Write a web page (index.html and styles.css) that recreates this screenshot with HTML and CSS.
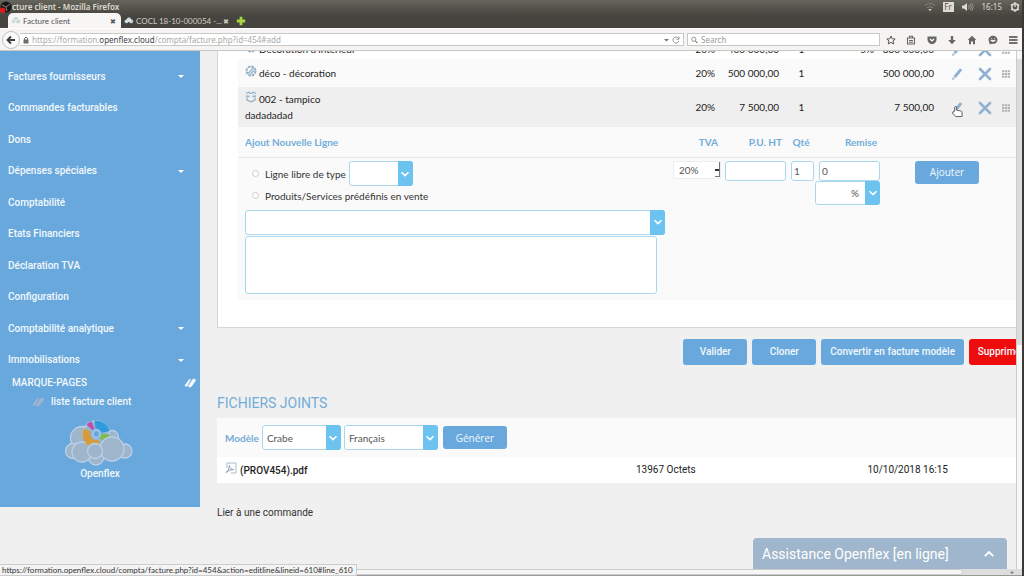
FILE: index.html
```html
<!DOCTYPE html>
<html lang="fr">
<head>
<meta charset="utf-8">
<title>Facture client</title>
<link rel="stylesheet" href="styles.css">
</head>
<body>
<svg class="defs" aria-hidden="true">
  <symbol id="chevron" viewBox="0 0 10 10"><path d="M1.500 3.200 5 6.600 8.500 3.200" fill="none" stroke="currentColor" stroke-width="1.600"/></symbol>
  <symbol id="cloud" viewBox="0 0 12 10"><circle cx="3" cy="6" r="2.300" fill="#cfdbe2"/><circle cx="8.500" cy="6" r="2.500" fill="#c3d2dc"/><circle cx="5.800" cy="4" r="2.700" fill="#dfe8d2"/><path d="M3.500 3.500A3 3 0 0 1 8 2.500" fill="none" stroke="#7fb6d8" stroke-width="1"/></symbol>
  <symbol id="pencil" viewBox="0 0 12 14"><path d="M9 1.200 11.300 3 4.800 11 2.400 9.200zM1.900 10 4 11.700 1 13z" fill="#90b1d0"/></symbol>
  <symbol id="cross" viewBox="0 0 14 14"><path d="M2 2 12 12M12 2 2 12" stroke="#90b1d0" stroke-width="2.600" stroke-linecap="round"/></symbol>
  <symbol id="grip" viewBox="0 0 8 8"><path d="M0 1.200H8M0 4H8M0 6.800H8" stroke="#b4b4b4" stroke-width="2" stroke-dasharray="2.300 .6"/></symbol>
  <symbol id="service" viewBox="0 0 12 12"><circle cx="6" cy="6" r="4.500" fill="none" stroke="#8fb0c9" stroke-width="2" stroke-dasharray="2.600 .9"/><path d="M3 8.500 8.500 3M5.500 9 9 5.500" stroke="#8fb0c9" stroke-width="1.200"/></symbol>
  <symbol id="product" viewBox="0 0 12 12"><path d="M.8 2.500 4 1.200 5.500 2.800M6.500 2.800 8 1.200 11.200 2.500M1 5 4.500 5.500M7.500 5.500 11 5M2 6.500V9L6 10.800 10 9V6.500" fill="none" stroke="#8fb0c9" stroke-width="1.300"/></symbol>
  <symbol id="books" viewBox="0 0 12 10"><path d="M.5 7.500 5 1.500 7.200 .8 3.800 7.500 2.500 9zM4.200 8 8.500 1.300 11.200 .6 11.600 3 7.700 8.500 5 9.700z" fill="currentColor"/></symbol>
</svg>

<header class="browser">
  <div class="titlebar">
    <svg class="dash" viewBox="0 0 12 12"><circle cx="6" cy="6" r="5.500" fill="#171515"/><path d="M2 4 6 6 10 3M6 6 7 10" stroke="#85827a" fill="none"/><circle cx="2.700" cy="9.200" r="2.600" fill="#e81818"/></svg>
    <span class="window-name">cture client - Mozilla Firefox</span>
    <div class="indicators">
      <svg class="i10" viewBox="0 0 10 10"><path d="M0 3.500Q5 -.5 10 3.500M2 5.800Q5 3.500 8 5.800" fill="none" stroke="#85837a"/><path d="M3.300 7H6.700L5 9.200z" fill="#d0cec4"/></svg>
      <span class="lang">Fr</span>
      <svg class="i12" viewBox="0 0 12 10"><path d="M0 3.500H2L5 1V9L2 6.500H0z" fill="#dfdbd2"/><path d="M6.500 3Q8 5 6.500 7M8 2Q10.400 5 8 8M9.500 1Q12.700 5 9.500 9" fill="none" stroke="#98958c"/></svg>
      <span class="clock">16:15</span>
      <svg class="i10" viewBox="0 0 10 10"><circle cx="5" cy="5" r="3.200" fill="none" stroke="#dfdbd2" stroke-width="1.500" /><path d="M5 0V5M.8 2.500 2 3.500M9.200 2.500 8 3.500M1 8 2.500 7M9 8 7.500 7M5 8V10" stroke="#dfdbd2" stroke-width="1.300"/></svg>
    </div>
  </div>
  <nav class="tabs">
    <a class="tab current" href="#"><svg class="fav"><use href="#cloud"/></svg><span class="tab-text">Facture client</span><span class="tab-close">✖</span></a>
    <a class="tab" href="#"><svg class="fav"><use href="#cloud"/></svg><span class="tab-text">COCL 18-10-000054 -...</span><span class="tab-close">✖</span></a>
    <button class="new-tab" aria-label="Nouvel onglet"><svg class="i10" viewBox="0 0 10 10"><path d="M5 .8V9.200M.8 5H9.200" stroke="#a8d442" stroke-width="2.800"/></svg></button>
  </nav>
  <div class="toolbar">
    <button class="back" aria-label="Retour"><svg class="i10" viewBox="0 0 10 10"><path d="M9 5H2.500M5 1.500 1.500 5 5 8.500" fill="none" stroke="#3f3f3c" stroke-width="1.900"/></svg></button>
    <div class="address">
      <svg class="lock" viewBox="0 0 6 8"><path d="M1.500 4V2.200Q3 .2 4.500 2.200V4" fill="none" stroke="#6d6d6b"/><path d="M.5 3.500H5.500V7.500H.5z" fill="#6d6d6b"/></svg>
      <span class="url">https://formation.<b>openflex.cloud</b>/compta/facture.php?id=454#add</span>
      <svg class="reload" viewBox="0 0 16 8"><path d="M0 3H5L2.500 5.500z" fill="#777"/><path d="M14.500 2.500A3 3 0 1 0 14.800 5M15 .5V3.200H12.300" fill="none" stroke="#999"/></svg>
    </div>
    <label class="search"><svg class="lens" viewBox="0 0 8 8"><circle cx="3.200" cy="3.200" r="2.400" fill="none" stroke="#888"/><path d="M5 5 7.500 7.500" stroke="#888" stroke-width="1.300"/></svg><input type="text" aria-label="Search" placeholder="Search"></label>
    <div class="tools">
      <svg class="i10" viewBox="0 0 10 10"><path d="M5 1 6.200 3.800 9.200 4 7 6 7.700 9 5 7.400 2.300 9 3 6 .8 4 3.800 3.800z" fill="none" stroke="#555"/></svg>
      <svg class="i10" viewBox="0 0 10 10"><path d="M1.500 3H8.500V9H1.500zM3.500 3V1.300H6.500V3M3 5.500H7M3 7.300H7" fill="none" stroke="#666" stroke-width="1.100"/></svg>
      <svg class="i10" viewBox="0 0 10 10"><path d="M.5 1.500H9.500V5Q9 8.500 5 9.300 1 8.500 .5 5z" fill="#666"/><path d="M3 4 5 6 7 4" fill="none" stroke="#fff" stroke-width="1.200"/></svg>
      <svg class="i10" viewBox="0 0 10 10"><path d="M3.800 1H6.200V5H8.800L5 9.200 1.200 5H3.800z" fill="#666"/></svg>
      <svg class="i10" viewBox="0 0 10 10"><path d="M5 .8 9.300 5H8V9.200H6V6.500H4V9.200H2V5H.7z" fill="#666"/></svg>
      <svg class="i10" viewBox="0 0 10 10"><ellipse cx="5" cy="4.800" rx="4.500" ry="4" fill="#666"/><path d="M1.500 6V9.500L5 8z" fill="#666"/><path d="M2.500 5.300H7.500Q5 8 2.500 5.300M3 3.500H4M6 3.500H7" fill="#fff" stroke="#fff" stroke-width=".6"/></svg>
      <svg class="i10" viewBox="0 0 10 10"><path d="M1 2H9.500M1 5H9.500M1 8H9.500" stroke="#444" stroke-width="1.700"/></svg>
    </div>
  </div>
</header>

<div class="viewport">
  <div class="page">
    <aside class="sidebar">
      <ul class="menu">
        <li><a href="#">Factures fournisseurs</a><i class="caret"></i></li>
        <li><a href="#">Commandes facturables</a></li>
        <li><a href="#">Dons</a></li>
        <li><a href="#">Dépenses spéciales</a><i class="caret"></i></li>
        <li><a href="#">Comptabilité</a></li>
        <li><a href="#">Etats Financiers</a></li>
        <li><a href="#">Déclaration TVA</a></li>
        <li><a href="#">Configuration</a></li>
        <li><a href="#">Comptabilité analytique</a><i class="caret"></i></li>
        <li><a href="#">Immobilisations</a><i class="caret"></i></li>
      </ul>
      <div class="bookmarks"><span>MARQUE-PAGES</span><svg class="books"><use href="#books"/></svg></div>
      <a class="bookmark" href="#"><svg class="books"><use href="#books"/></svg>liste facture client</a>
      <a class="brand" href="#">
        <svg class="logo" viewBox="0 0 68 46">
          <g fill="#9fb5ca" stroke="#b9d0ec" stroke-width="1.300">
            <circle cx="17" cy="18" r="11.500"/><circle cx="47" cy="17" r="6.500"/><circle cx="8" cy="31" r="7.500"/><circle cx="60" cy="31" r="7"/><circle cx="31" cy="37" r="8"/><circle cx="17" cy="32" r="10"/>
            <circle cx="31" cy="14" r="13" fill="#8fb9dd"/>
          </g>
          <g fill="none" stroke-width="8">
            <path d="M30 4.500A9.500 9.500 0 0 1 40.500 12" stroke="#2d9bdc"/><path d="M40.500 14A9.500 9.500 0 0 1 37 20.500" stroke="#7fbd50"/><path d="M35 23A9.500 9.500 0 0 1 22.500 10" stroke="#d59b3c"/><path d="M24.500 7.500A9.500 9.500 0 0 1 28 5" stroke="#c84da8"/>
          </g>
          <circle cx="31.500" cy="14" r="3.500" fill="#69a8dc" stroke="#b9d0ec"/>
          <g fill="#9fb5ca" stroke="#b9d0ec" stroke-width="1.300"><circle cx="47" cy="29" r="12"/><circle cx="30" cy="31" r="7.500"/></g>
        </svg>
        <span>Openflex</span>
      </a>
    </aside>

    <main class="content">
      <section class="card">
        <table class="lines">
          <colgroup><col><col class="c-tva"><col class="c-price"><col class="c-qty"><col class="c-disc"><col class="c-total"><col class="c-edit"><col class="c-del"><col class="c-grip"></colgroup>
          <tbody>
            <tr class="line first"><td><svg class="kind"><use href="#service"/></svg>Décoration d'intérieur</td><td>20%</td><td>400 000,00</td><td>1</td><td>5%</td><td>380 000,00</td><td><svg class="pencil"><use href="#pencil"/></svg></td><td><svg class="cross"><use href="#cross"/></svg></td><td><svg class="grip"><use href="#grip"/></svg></td></tr>
            <tr class="line"><td><svg class="kind"><use href="#service"/></svg>déco - décoration</td><td>20%</td><td>500 000,00</td><td>1</td><td></td><td>500 000,00</td><td><svg class="pencil"><use href="#pencil"/></svg></td><td><svg class="cross"><use href="#cross"/></svg></td><td><svg class="grip"><use href="#grip"/></svg></td></tr>
            <tr class="line shaded"><td><svg class="kind"><use href="#product"/></svg>002 - tampico<br>dadadadad</td><td>20%</td><td>7 500,00</td><td>1</td><td></td><td>7 500,00</td><td><svg class="pencil"><use href="#pencil"/></svg></td><td><svg class="cross"><use href="#cross"/></svg></td><td><svg class="grip"><use href="#grip"/></svg></td></tr>
            <tr class="heads"><th>Ajout Nouvelle Ligne</th><th>TVA</th><th>P.U. HT</th><th>Qté</th><th>Remise</th><th colspan="4"></th></tr>
            <tr class="entry">
              <td>
                <div class="choice"><input type="radio" name="kind" id="free"><label for="free">Ligne libre de type</label>
                  <span class="combo combo-type"><select aria-label="Type de ligne"><option></option></select><span class="arrow"><svg><use href="#chevron"/></svg></span></span></div>
                <div class="choice second"><input type="radio" name="kind" id="preset"><label for="preset">Produits/Services prédéfinis en vente</label></div>
                <span class="combo combo-product"><select aria-label="Produit"><option></option></select><span class="arrow"><svg><use href="#chevron"/></svg></span></span>
                <textarea aria-label="Description"></textarea>
              </td>
              <td><div class="vat"><select aria-label="TVA"><option>20%</option></select><span class="vat-arrow"></span></div></td>
              <td><input class="field" type="text" aria-label="P.U. HT"></td>
              <td><input class="field qty" type="text" value="1" aria-label="Qté"></td>
              <td><input class="field disc" type="text" value="0" aria-label="Remise"><span class="combo combo-unit"><select aria-label="Unité de remise"><option>%</option></select><span class="arrow"><svg><use href="#chevron"/></svg></span></span></td>
              <td class="add" colspan="4"><button class="btn small">Ajouter</button></td>
            </tr>
          </tbody>
        </table>
      </section>

      <div class="actions"><button class="btn">Valider</button><button class="btn">Cloner</button><button class="btn">Convertir en facture modèle</button><button class="btn danger">Supprimer</button></div>

      <h2>FICHIERS JOINTS</h2>
      <section class="files">
        <div class="generate"><label for="model">Modèle</label>
          <span class="combo combo-model"><select id="model"><option>Crabe</option></select><span class="arrow"><svg><use href="#chevron"/></svg></span></span>
          <span class="combo combo-lang"><select aria-label="Langue"><option>Français</option></select><span class="arrow"><svg><use href="#chevron"/></svg></span></span>
          <button class="btn small">Générer</button></div>
        <div class="file"><a href="#"><svg class="pdf" viewBox="0 0 12 12"><path d="M2 6V1H11V11H6" fill="none" stroke="#a9b9c9"/><path d="M1 10.500Q4 9 4.500 3.500 5 8 9 7.500 5 7 1 10.500" fill="none" stroke="#8fa5bb"/></svg>(PROV454).pdf</a><span>13967 Octets</span><span class="when">10/10/2018 16:15</span></div>
      </section>
      <p class="link-order">Lier à une commande</p>
    </main>
  </div>
  <div class="vscroll"><div class="thumb"></div></div>
  <button class="assist">Assistance Openflex [en ligne]<svg><use href="#chevron"/></svg></button>
  <div class="status">https://formation.openflex.cloud/compta/facture.php?id=454&amp;action=editline&amp;lineid=610#line_610</div>
  <svg class="pointer" viewBox="0 0 12 14"><path d="M3 6.500V2Q4 .8 5 2V5.500L10 6.500Q11 7 11 8.500V12.500H4L1 9V7.500Z" fill="#fff" stroke="#555"/></svg>
</div>
<div class="hscroll"><div class="hthumb"></div><span>▸</span></div>
</body>
</html>
```
FILE: styles.css
```css
* { box-sizing: border-box; }
body { margin: 0; height: 100vh; display: flex; flex-direction: column; overflow: hidden; background: #f0f0f0; color: #333; font: 400 10px/16px Lato, "Open Sans", sans-serif; border-right: 2px solid #3a3935; }
button, input, select, textarea { font: inherit; color: inherit; margin: 0; }
button { border: 0; padding: 0; background: none; }
a { color: inherit; text-decoration: none; }
.defs { position: absolute; width: 0; height: 0; }
.i10 { width: 10px; height: 10px; }
.i12 { width: 12px; height: 10px; }

/* browser window */
.browser { background: linear-gradient(#66655b, #45443e 16px, #45443e); font: 8px/12px "Noto Sans", "Open Sans", sans-serif; }
.titlebar { display: flex; align-items: center; height: 13px; color: #dfdbd2; }
.dash { width: 12px; height: 12px; }
.window-name { font-weight: 600; flex: 1; }
.indicators { display: flex; align-items: center; gap: 8px; padding-right: 2px; }
.lang { background: #dfdbd2; color: #55534b; width: 11px; height: 10px; line-height: 10px; text-align: center; }
.tabs { display: flex; height: 15px; padding-left: 8px; }
.tab { display: flex; align-items: center; gap: 2px; width: 113px; padding: 0 5px 0 3px; color: #d0cdc4; font-family: Lato, sans-serif; }
.tab.current { background: #f7f6f5; color: #555; border-radius: 5px 5px 0 0; }
.tab-text { flex: 1; min-width: 0; white-space: nowrap; }
.tab-close { font-size: 7px; }
.fav { flex: none; width: 10px; height: 9px; }
.new-tab { display: flex; align-items: center; padding-left: 2px; }
.toolbar { display: flex; align-items: center; height: 23px; background: #f5f4f2; border-top: 1px solid #fff; border-bottom: 1px solid #c8c7c4; padding: 0 4px 0 2px; }
.back { width: 18px; height: 18px; border: 1px solid #c0bfbc; border-radius: 50%; background: #fcfcfc; display: grid; place-items: center; }
.address, .search { display: flex; align-items: center; height: 13px; background: #fff; border: 1px solid #c9c8c5; }
.address { flex: 1; border-left: 0; padding: 0 3px; gap: 3px; }
.lock { width: 6px; height: 8px; }
.url { flex: 1; color: #aaa; }
.url b { color: #444; font-weight: 400; }
.reload { width: 16px; height: 8px; }
.search { width: 193px; margin-left: 3px; padding-left: 3px; gap: 3px; }
.search input { flex: 1; min-width: 0; border: 0; padding: 0; height: 11px; }
.search input::placeholder { color: #999; }
.lens { width: 7px; height: 8px; }
.tools { display: flex; justify-content: space-between; width: 132px; margin-left: 6px; }

/* page frame */
.viewport { flex: 1; min-height: 0; display: flex; position: relative; }
.page { flex: 1; min-width: 0; display: flex; align-items: flex-start; overflow: hidden; }
.vscroll { width: 6px; background: #f7f7f7; border-left: 1px solid #ccc; padding-top: 8px; }
.thumb { height: 56%; background: #dcdcdc; }
.hscroll { display: flex; align-items: center; height: 7px; background: #ddd; border-bottom: 1px solid #999; font-size: 6px; padding-right: 8px; color: #777; }
.hthumb { height: 6px; width: 95%; background: #f6f6f6; border: 1px solid #ccc; border-radius: 0 3px 3px 0; margin-right: auto; }

/* sidebar */
.sidebar { flex: none; width: 200px; background: #69a8dc; color: #f2f8fd; font: 500 10px/16px Roboto, sans-serif; padding: 10px 0 25px; }
.menu { list-style: none; margin: 0; padding: 0 14px 0 8px; display: grid; grid-auto-rows: 1fr; height: 315px; }
.menu li { display: flex; align-items: center; justify-content: space-between; }
.caret { border: 3px solid transparent; border-top-color: #fff; border-bottom: 0; margin-right: 2px; }
.books { width: 12px; height: 10px; }
.bookmarks { display: flex; justify-content: space-between; align-items: center; padding: 0 4px 0 12px; height: 14px; }
.bookmark { display: flex; align-items: center; gap: 7px; padding: 4px 0 0 32px; }
.bookmark .books { color: #9fb3cf; }
.brand { display: block; padding-top: 10px; text-align: center; }
.logo { display: block; width: 68px; height: 46px; margin: 0 auto 0 65px; }

/* invoice lines */
.content { flex: 1; min-width: 0; padding-left: 17px; }
.card { background: #fff; border: 1px solid #d5d5d5; border-width: 0 0 1px 1px; padding: 0 0 27px 20px; margin-top: -16px; }
.lines { width: 100%; border-collapse: collapse; table-layout: fixed; background: #fafafa; }
.c-tva { width: 48px; } .c-price { width: 64px; } .c-qty { width: 30px; } .c-disc { width: 65px; }
.c-total { width: 59px; } .c-edit { width: 35px; } .c-del { width: 21px; } .c-grip { width: 21px; }
.lines td, .lines th { padding: 0; text-align: right; }
.lines td:first-child, .lines th:first-child { text-align: left; padding-left: 7px; }
.line { height: 28px; color: #222; }
.line.first { height: 24px; background: #fff; }
.line.shaded { height: 40px; background: #efefef; }
.line td { padding-right: 6px; }
.line td:nth-child(4) { text-align: center; padding: 0 0 0 3px; }
.line td:nth-child(6) { padding-right: 5px; }
.line td:nth-child(n+7) { text-align: center; padding: 0; }
.line.first td { padding-top: 4px; }
.kind { width: 12px; height: 12px; margin-right: 2px; }
.pencil, .cross, .grip { vertical-align: middle; }
.pencil { width: 12px; height: 14px; }
.cross { width: 14px; height: 14px; }
.grip { width: 8px; height: 8px; }
.heads { height: 30px; color: #72acd8; border-bottom: 1px solid #e8e8e8; }
.lines .heads th { font-weight: 700; padding-right: 3px; }
.lines .heads th:nth-child(4) { text-align: center; padding: 0 0 0 2px; }
.lines .entry td { vertical-align: top; padding-top: 3px; height: 143px; }
.choice { display: flex; align-items: center; height: 26px; padding-left: 7px; }
.choice.second { height: 18px; }
.choice input { appearance: none; width: 7px; height: 7px; border: 1px solid #ccc; border-radius: 50%; background: #fff; margin-right: 6px; }
.choice .combo { margin-left: 3px; }
.combo { display: grid; height: 25px; color: #555; }
.combo select { grid-area: 1 / 1; width: 100%; appearance: none; background: #fff; border: 1px solid #a9d8ee; border-radius: 3px; padding: 0 4px; }
.arrow { grid-area: 1 / 1; justify-self: end; width: 15px; display: grid; place-items: center; background: #6cc3f0; color: #fff; border-radius: 0 3px 3px 0; pointer-events: none; }
.arrow svg { width: 10px; height: 10px; }
.combo-type { width: 64px; }
.combo-product { width: 420px; margin-top: 5px; }
textarea { display: block; width: 412px; height: 58px; margin-top: 1px; border: 1px solid #a9d8ee; border-radius: 3px; resize: none; background: #fff; }
.field { display: block; width: 61px; height: 20px; margin-left: 4px; border: 1px solid #a9d8ee; border-radius: 3px; background: #fff; padding: 0 2px; color: #555; }
.qty { width: 23px; margin-left: 6px; }
.disc { margin-left: 4px; }
.combo-unit { height: 24px; }
.combo-unit select { padding-right: 20px; text-align-last: right; }
.vat { display: flex; height: 18px; border: 1px solid #eee; background: #fff; }
.vat select { flex: 1; min-width: 0; appearance: none; border: 0; background: none; padding: 0 5px; color: #555; }
.vat-arrow { width: 5px; margin: 0 0 1px; border-right: 1px solid #777; border-bottom: 1px solid #777; background: linear-gradient(#333, #333) 0 7px / 4px 2px no-repeat; }
.lines .entry .add { text-align: center; padding-right: 2px; }

/* actions and files */
.btn { height: 26px; min-width: 64px; padding: 0 9px; border-radius: 3px; background: #69a8dc; color: #f2f8fd; font: 500 10px/16px Roboto, sans-serif; white-space: nowrap; }
.btn.small { height: 23px; font-family: "Open Sans", sans-serif; }
.btn.danger { background: #ee0c0c; padding: 0 8px; }
.actions { display: flex; justify-content: flex-end; gap: 5px; margin: 11px -17px 0 0; }
h2 { margin: 28px 0 5px; font: 400 14px/20px Roboto, sans-serif; color: #72acd8; }
.files { background: #fff; }
.generate { display: flex; align-items: center; gap: 3px; height: 39px; padding-left: 8px; background: #fafafa; }
.generate label { color: #72acd8; font-weight: 700; }
.combo-model { width: 79px; }
.combo-lang { width: 94px; }
.generate .btn { margin-left: 2px; }
.file { display: grid; grid-template-columns: 411px 1fr auto; align-items: center; height: 26px; padding: 0 68px 0 8px; color: #222; font-family: Roboto, sans-serif; }
.file a { font-weight: 500; }
.pdf { width: 12px; height: 12px; margin-right: 3px; }
.link-order { margin: 22px 0 0; font: 10px/16px Roboto, sans-serif; }

/* overlays */
.assist { position: absolute; right: 15px; bottom: 0; width: 254px; height: 31px; padding: 0 12px 0 9px; display: flex; align-items: center; justify-content: space-between; background: #9fb6cc; border-radius: 4px 4px 0 0; color: #fff; font: 14px/20px Roboto, sans-serif; }
.assist svg { width: 12px; height: 12px; transform: rotate(180deg); }
.status { position: absolute; left: 0; bottom: -7px; z-index: 1; padding: 0 3px 0 2px; height: 12px; background: #f4f4f4; border: 1px solid #ccc; border-left: 0; font: 8px/11px Lato, sans-serif; }
.pointer { position: absolute; right: 59px; top: 54px; width: 11px; height: 13px; }
```
